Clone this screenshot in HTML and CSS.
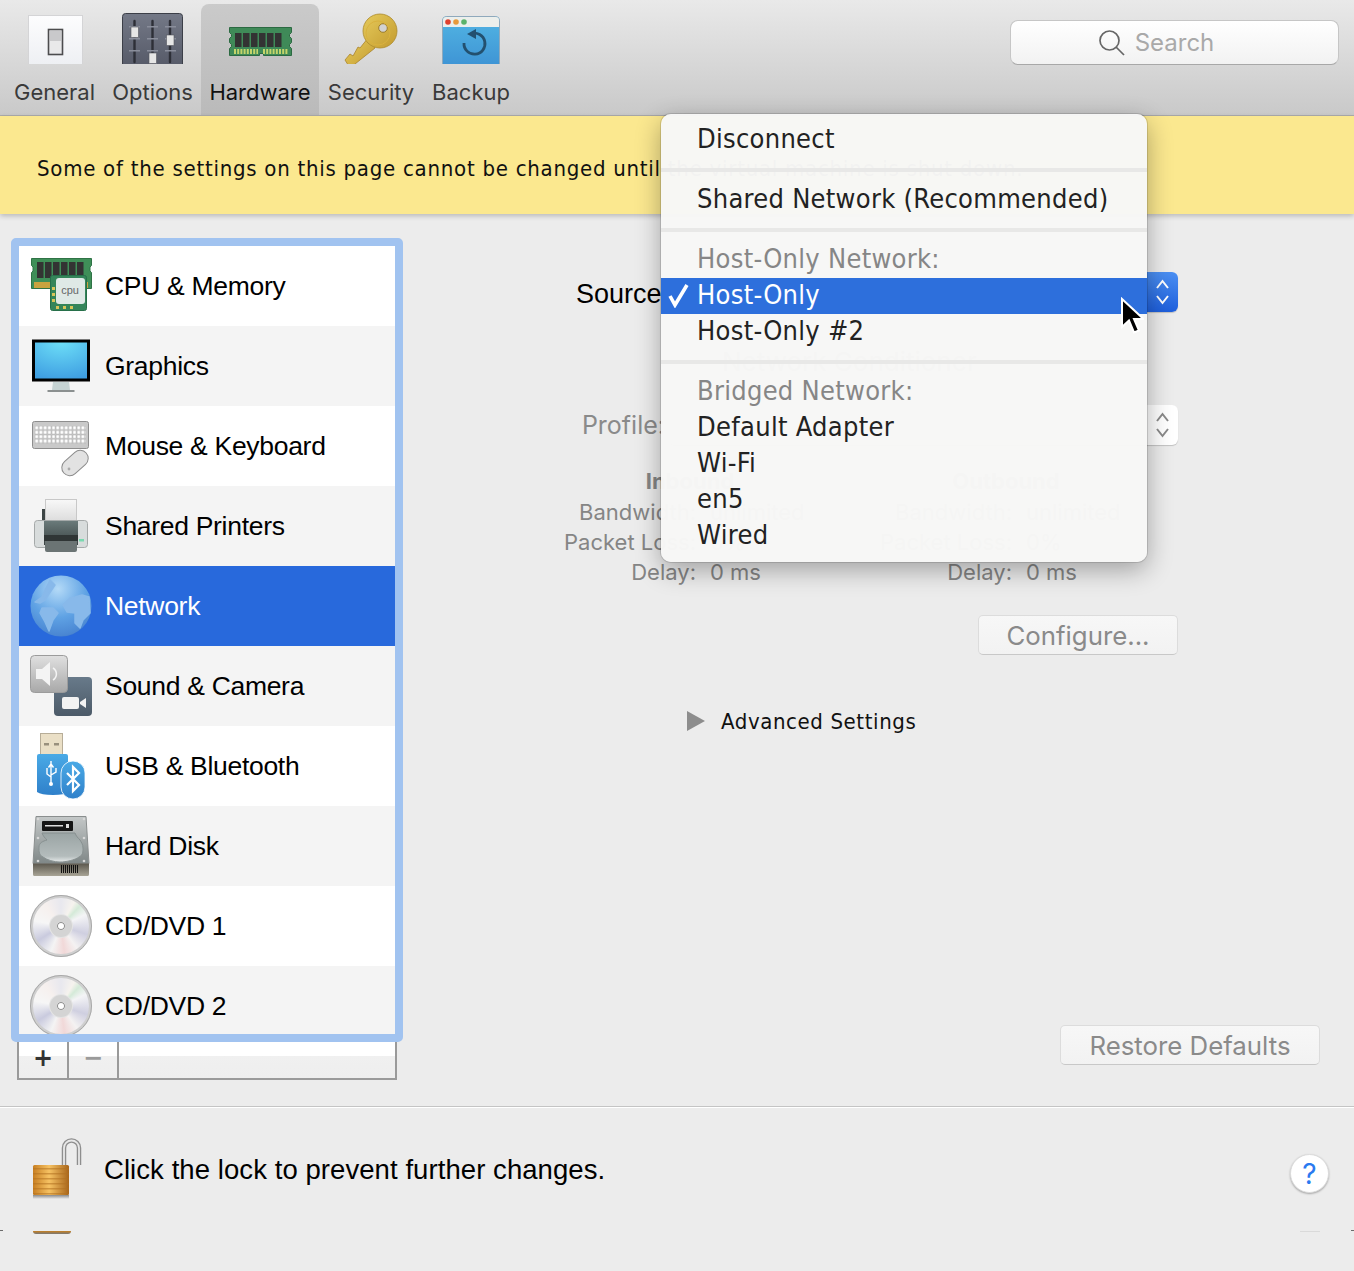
FILE: index.html
```html
<!DOCTYPE html>
<html lang="en">
<head>
<meta charset="utf-8">
<title>Hardware - Network</title>
<link rel="stylesheet" href="styles.css">
</head>
<body>
<div class="window">
  <header class="toolbar">
    <nav class="tools">
      <div class="tool tool-general">
        <svg class="tool-icon" viewBox="0 0 99 60"><defs><linearGradient id="gen" x1="0" y1="0" x2="0" y2="1"><stop offset="0" stop-color="#fdfdfe"/><stop offset="1" stop-color="#eceef2"/></linearGradient></defs><rect x="23.500" y="11.500" width="54" height="55" fill="url(#gen)" stroke="#d4d4d6"/><rect x="43.500" y="25.500" width="14" height="25" fill="#e9e9ea" stroke="#4c4c4e" stroke-width="1.600"/><rect x="45" y="27" width="11" height="10" fill="#c9c9cb"/></svg>
        <span class="tool-label">General</span>
      </div>
      <div class="tool tool-options">
        <svg class="tool-icon" viewBox="0 0 97 60"><defs><linearGradient id="opt" x1="0" y1="0" x2="0" y2="1"><stop offset="0" stop-color="#747987"/><stop offset="1" stop-color="#545866"/></linearGradient></defs><rect x="18.500" y="9.500" width="60" height="56" rx="3" fill="url(#opt)" stroke="#3c3f48"/><g stroke="#2d2f37" stroke-width="2.400" stroke-linecap="round"><line x1="30.500" y1="17" x2="30.500" y2="58"/><line x1="48.500" y1="17" x2="48.500" y2="58"/><line x1="66" y1="17" x2="66" y2="58"/></g><g fill="#8a8e9b"><rect x="25" y="22" width="11" height="1.500"/><rect x="43" y="22" width="11" height="1.500"/><rect x="61" y="22" width="11" height="1.500"/><rect x="25" y="34" width="11" height="1.500"/><rect x="43" y="34" width="11" height="1.500"/><rect x="61" y="34" width="11" height="1.500"/><rect x="25" y="46" width="11" height="1.500"/><rect x="43" y="46" width="11" height="1.500"/><rect x="61" y="46" width="11" height="1.500"/></g><g fill="#e6e6e6" stroke="#55575f" stroke-width=".6"><rect x="27" y="23" width="7.500" height="10.500"/><rect x="45" y="49" width="7.500" height="10.500"/><rect x="62.500" y="31" width="7.500" height="10.500"/></g></svg>
        <span class="tool-label">Options</span>
      </div>
      <div class="tool tool-active tool-hardware">
        <svg class="tool-icon" viewBox="0 0 118 60"><path d="M28.500 23.500h62v5l-2 2v2l2 2v4l-2 2v2l2 2v7h-28v-2h-4v2h-30v-7l2-2v-2l-2-2v-4l2-2v-2l-2-2z" fill="#3f8a58" stroke="#2c6a42"/><g fill="#333"><rect x="34" y="29" width="6.500" height="14"/><rect x="42" y="29" width="6.500" height="14"/><rect x="50" y="29" width="6.500" height="14"/><rect x="58" y="29" width="6.500" height="14"/><rect x="66" y="29" width="6.500" height="14"/><rect x="74" y="29" width="6.500" height="14"/></g><path d="M33 47.500h24M62 47.500h25" stroke="#c3d46a" stroke-width="5" stroke-dasharray="2 1.200"/></svg>
        <span class="tool-label">Hardware</span>
      </div>
      <div class="tool tool-security">
        <svg class="tool-icon" viewBox="0 0 104 60"><defs><linearGradient id="keyg" x1="0" y1="0" x2="1" y2="1"><stop offset="0" stop-color="#e6cb5c"/><stop offset="1" stop-color="#c39a2e"/></linearGradient></defs><path d="M49 34l-8 10-2-1-5 9-3-2-5 6 5 8 25-20z" fill="url(#keyg)" stroke="#a9842b" stroke-width=".8" stroke-linejoin="round"/><circle cx="61" cy="27" r="17" fill="url(#keyg)" stroke="#ac8a2c" stroke-width=".8"/><circle cx="64" cy="24" r="4.300" fill="#d2d2d2" stroke="#9c7c2a"/><circle cx="59" cy="29" r="12" fill="none" stroke="#d9b23e" stroke-width="1"/></svg>
        <span class="tool-label">Security</span>
      </div>
      <div class="tool tool-backup">
        <svg class="tool-icon" viewBox="0 0 96 60"><defs><linearGradient id="bak" x1="0" y1="0" x2="0" y2="1"><stop offset="0" stop-color="#52b5e3"/><stop offset="1" stop-color="#3d92d4"/></linearGradient></defs><rect x="19.500" y="12.500" width="57" height="52" rx="4" fill="url(#bak)" stroke="#8fa9bc"/><path d="M20 23v-7a3 3 0 0 1 3-3h50a3 3 0 0 1 3 3v7z" fill="#ecefec"/><circle cx="25" cy="18" r="2.800" fill="#e0402e"/><circle cx="33" cy="18" r="2.800" fill="#e89a3c"/><circle cx="41" cy="18" r="2.800" fill="#5cb36a"/><path d="M41 39a10.500 10.500 0 1 0 7-9.200" fill="none" stroke="#23506f" stroke-width="2.800"/><path d="M44 30l9-5v10z" fill="#23506f"/></svg>
        <span class="tool-label">Backup</span>
      </div>
    </nav>
    <div class="search">
      <svg class="search-icon" viewBox="0 0 26 26"><circle cx="10.500" cy="10.500" r="9.500" fill="none" stroke="#666" stroke-width="1.700"/><line x1="17" y1="17" x2="25" y2="25" stroke="#666" stroke-width="1.700"/></svg>
      <span class="search-text">Search</span>
    </div>
  </header>

  <div class="banner">Some of the settings on this page cannot be changed until the virtual machine is shut down.</div>

  <main class="main">
    <aside class="sidebar">
      <div class="list-ring">
        <ul class="list">
          <li class="row">
            <svg class="row-icon" viewBox="0 0 62 80"><path d="M1.500 12.500h60v7l-1.500 1.500v4l1.500 1.500v16h-60v-16l1.500-1.500v-4l-1.500-1.500z" fill="#3f8f58" stroke="#2f7346"/><g fill="#333"><rect x="7" y="16" width="6.500" height="16"/><rect x="15" y="16" width="6.500" height="16"/><rect x="23" y="16" width="6.500" height="16"/><rect x="31" y="16" width="6.500" height="16"/><rect x="39" y="16" width="6.500" height="16"/><rect x="47" y="16" width="6.500" height="16"/></g><rect x="4" y="36" width="54" height="6" fill="#c9a33f"/><rect x="20.500" y="29.500" width="36" height="35" rx="2" fill="#35855a" stroke="#27704a"/><rect x="26" y="32" width="29" height="26" rx="3" fill="#dfe9e6"/><g fill="#d9c55a"><rect x="22" y="41" width="3" height="3"/><rect x="22" y="47" width="3" height="3"/><rect x="22" y="53" width="3" height="3"/><rect x="26" y="60" width="3" height="3"/><rect x="33" y="60" width="3" height="3"/><rect x="40" y="60" width="3" height="3"/></g><text x="40" y="48" class="cpu-text">cpu</text></svg>
            <span class="row-label">CPU &amp; Memory</span>
          </li>
          <li class="row">
            <svg class="row-icon" viewBox="0 0 62 80"><defs><radialGradient id="scr" cx=".5" cy="0" r="1"><stop offset="0" stop-color="#6ee0f8"/><stop offset="1" stop-color="#3f9fe2"/></radialGradient></defs><rect x="3.500" y="15" width="55" height="39" fill="url(#scr)" stroke="#000" stroke-width="3"/><path d="M23 56h16l1 8H22z" fill="#c6d3d3"/><rect x="17.500" y="64" width="27" height="2" fill="#8b9090"/></svg>
            <span class="row-label">Graphics</span>
          </li>
          <li class="row">
            <svg class="row-icon" viewBox="0 0 62 80"><defs><pattern id="keys" width="4.200" height="4.400" patternUnits="userSpaceOnUse" x="5" y="20"><rect width="3.400" height="3.600" fill="#fff" stroke="#8c8c8c" stroke-width=".4"/></pattern></defs><rect x="2.500" y="15.500" width="56" height="27" rx="2" fill="#c9c9c9" stroke="#8e8e8e"/><rect x="5" y="20" width="51" height="18" fill="url(#keys)"/><g transform="rotate(-42 45 57)"><rect x="30" y="49" width="30" height="16" rx="8" fill="#e2e2e2" stroke="#8b8b8b"/></g><circle cx="39" cy="63" r="1.400" fill="#aaa"/></svg>
            <span class="row-label">Mouse &amp; Keyboard</span>
          </li>
          <li class="row">
            <svg class="row-icon" viewBox="0 0 62 80"><defs><linearGradient id="prn" x1="0" y1="0" x2="0" y2="1"><stop offset="0" stop-color="#f8f8f8"/><stop offset="1" stop-color="#dcdcdc"/></linearGradient><linearGradient id="prb" x1="0" y1="0" x2="0" y2="1"><stop offset="0" stop-color="#6a7a7a"/><stop offset="1" stop-color="#3b4444"/></linearGradient></defs><rect x="12" y="23" width="34" height="20" fill="#3c4444"/><rect x="15.500" y="13.500" width="31" height="22" fill="url(#prn)" stroke="#c8c8c8"/><rect x="4.500" y="34.500" width="53" height="27" rx="3" fill="#d8dcdc" stroke="#a5a9a9"/><rect x="14" y="35" width="34" height="24" fill="url(#prb)"/><rect x="14" y="49" width="34" height="6" fill="#2f3535"/><path d="M15 55h32v9a2 2 0 0 1-2 2H17a2 2 0 0 1-2-2z" fill="#6b7474"/><rect x="49" y="53" width="5" height="2.500" fill="#7ad9b0"/></svg>
            <span class="row-label">Shared Printers</span>
          </li>
          <li class="row row-selected">
            <svg class="row-icon" viewBox="0 0 62 80"><defs><radialGradient id="glb" cx=".45" cy=".22" r=".85"><stop offset="0" stop-color="#b4daf7"/><stop offset=".55" stop-color="#5fa2e4"/><stop offset=".9" stop-color="#4a86d2"/><stop offset="1" stop-color="#3d6fb6"/></radialGradient></defs><circle cx="31" cy="40" r="30.500" fill="url(#glb)"/><g fill="#88b9ea" stroke="#88b9ea" stroke-width="1.500" stroke-linejoin="round"><path d="M33 39l7-7 5-1 7-2 7 2 1 16-7 7-3 8-5-5v-10l-8-1z"/><path d="M12 42h11l5 5-5 7-4 11-4-9-5-9z"/><path d="M5 36l7-5 3-7 5-10 5 5-10 15-5 3z"/></g></svg>
            <span class="row-label">Network</span>
          </li>
          <li class="row">
            <svg class="row-icon" viewBox="0 0 62 80"><defs><linearGradient id="spk" x1="0" y1="0" x2="0" y2="1"><stop offset="0" stop-color="#e0e0e0"/><stop offset="1" stop-color="#a8a8a8"/></linearGradient><linearGradient id="cam" x1="0" y1="0" x2="0" y2="1"><stop offset="0" stop-color="#687a8a"/><stop offset="1" stop-color="#4c5a68"/></linearGradient></defs><rect x="24" y="31" width="38" height="39" rx="4" fill="url(#cam)"/><rect x="0.500" y="9.500" width="37" height="37" rx="4" fill="url(#spk)" stroke="#9c9c9c"/><path d="M6 23h6l8-7v24l-8-7H6z" fill="#f4f4f4"/><path d="M23 22a7 7 0 0 1 0 12" fill="none" stroke="#f4f4f4" stroke-width="1.500"/><rect x="32" y="51" width="17" height="12" rx="2" fill="#f2f2f2"/><path d="M50 56l6-4v10l-6-4z" fill="#f2f2f2"/></svg>
            <span class="row-label">Sound &amp; Camera</span>
          </li>
          <li class="row">
            <svg class="row-icon" viewBox="0 0 62 80"><defs><linearGradient id="usb" x1="0" y1="0" x2="0" y2="1"><stop offset="0" stop-color="#4aaae6"/><stop offset="1" stop-color="#2f80ca"/></linearGradient></defs><rect x="10.500" y="7.500" width="22" height="22" fill="#eadfc6" stroke="#b7ad98"/><rect x="14" y="17" width="5" height="2.500" fill="#99907d"/><rect x="24" y="17" width="5" height="2.500" fill="#99907d"/><path d="M7 30q0-2 2-2h27q2 0 2 2v36q-3 3-15 3-12 0-16-3z" fill="url(#usb)"/><path d="M21 35v22m0-19l-2.500 3.500m2.500-3.500l2.500 3.500M17 42v6l4 3m5-9v4l-5 3" stroke="#fff" stroke-width="1.400" fill="none"/><circle cx="21" cy="58" r="2" fill="#fff"/><rect x="31" y="35" width="24" height="38" rx="12" fill="url(#usb)" stroke="#fff" stroke-width=".8"/><path d="M37 47l12 12-6 6V41l6 6-12 12" fill="none" stroke="#fff" stroke-width="2.200"/></svg>
            <span class="row-label">USB &amp; Bluetooth</span>
          </li>
          <li class="row">
            <svg class="row-icon" viewBox="0 0 62 80"><defs><linearGradient id="hdd" x1="0" y1="0" x2="0" y2="1"><stop offset="0" stop-color="#c4c8c8"/><stop offset="1" stop-color="#7f8787"/></linearGradient><linearGradient id="hdp" x1="0" y1="0" x2="0" y2="1"><stop offset="0" stop-color="#9aa4a4"/><stop offset=".8" stop-color="#b4bcbc"/><stop offset="1" stop-color="#e6eaea"/></linearGradient><linearGradient id="hdb" x1="0" y1="0" x2="0" y2="1"><stop offset="0" stop-color="#5c584e"/><stop offset="1" stop-color="#a8a496"/></linearGradient></defs><path d="M6 10.500h50l3 47H3z" fill="url(#hdd)" stroke="#8a8e8e"/><path d="M3 57.500h56v11a1.500 1.500 0 0 1-1.500 1.500h-53a1.500 1.500 0 0 1-1.500-1.500z" fill="url(#hdb)"/><path d="M12 27c1 3 3 5 5 7-4 1-8 3-8 7 0 5 0 8 4 10 4 3 11 5 17 5s15-2 19-5c4-2 4-5 4-9 0-4-2-6-3-8-2-2-4-4-5-7z" fill="url(#hdp)" stroke="#879090" stroke-linejoin="round"/><rect x="12" y="15" width="31" height="10" rx="1" fill="#151515"/><rect x="15" y="19" width="18" height="1.500" fill="#ddd"/><rect x="36" y="18" width="3" height="4" fill="#ddd"/><path d="M31 63h17" stroke="#111" stroke-width="8" stroke-dasharray="1 1"/><g fill="#d8d8d8"><circle cx="8" cy="13" r="1.300"/><circle cx="54" cy="13" r="1.300"/><circle cx="8" cy="32" r="1.300"/><circle cx="54" cy="32" r="1.300"/><circle cx="8" cy="55" r="1.300"/><circle cx="54" cy="55" r="1.300"/></g></svg>
            <span class="row-label">Hard Disk</span>
          </li>
          <li class="row">
            <div class="cd"><div class="cd-hub"></div></div>
            <span class="row-label">CD/DVD 1</span>
          </li>
          <li class="row">
            <div class="cd"><div class="cd-hub"></div></div>
            <span class="row-label">CD/DVD 2</span>
          </li>
        </ul>
      </div>
      <div class="list-actions">
        <span class="action action-add">+</span>
        <span class="action action-remove">−</span>
      </div>
    </aside>

    <section class="pane">
      <div class="form-row">
        <span class="form-label form-label-source">Source:</span>
        <div class="select"><span class="stepper stepper-active"><svg class="chev" viewBox="0 0 16 30"><path d="M2.500 11L8 4l5.500 7M2.500 19L8 26l5.500-7" fill="none" stroke="currentColor" stroke-width="2"/></svg></span></div>
      </div>
      <h2 class="section-title">Network Conditioner</h2>
      <div class="form-row form-row-profile">
        <span class="form-label form-label-dim">Profile:</span>
        <div class="select"><span class="stepper"><svg class="chev" viewBox="0 0 16 30"><path d="M2.500 11L8 4l5.500 7M2.500 19L8 26l5.500-7" fill="none" stroke="currentColor" stroke-width="2"/></svg></span></div>
      </div>
      <div class="stats">
        <div class="stat">
          <div class="stat-title">Inbound</div>
          <span class="stat-key">Bandwidth:</span><span class="stat-val">unlimited</span>
          <span class="stat-key">Packet Loss:</span><span class="stat-val">0%</span>
          <span class="stat-key">Delay:</span><span class="stat-val">0 ms</span>
        </div>
        <div class="stat">
          <div class="stat-title">Outbound</div>
          <span class="stat-key">Bandwidth:</span><span class="stat-val">unlimited</span>
          <span class="stat-key">Packet Loss:</span><span class="stat-val">0%</span>
          <span class="stat-key">Delay:</span><span class="stat-val">0 ms</span>
        </div>
      </div>
      <div class="configure-wrap"><button class="btn btn-configure">Configure...</button></div>
      <div class="advanced"><span class="triangle"></span><span class="advanced-text">Advanced Settings</span></div>
      <button class="btn btn-restore">Restore Defaults</button>
    </section>
  </main>

  <footer class="footer">
    <svg class="lock" viewBox="0 0 52 62"><defs><linearGradient id="lk" x1="0" y1="0" x2="1" y2="0"><stop offset="0" stop-color="#c87f22"/><stop offset=".45" stop-color="#f6c263"/><stop offset="1" stop-color="#a8651a"/></linearGradient><pattern id="lks" width="4" height="5" patternUnits="userSpaceOnUse"><rect width="4" height="1.500" fill="#b06f1e" opacity=".55"/></pattern><linearGradient id="lkf" x1="0" y1="0" x2="0" y2="1"><stop offset="0" stop-color="#888"/><stop offset="1" stop-color="#ececec"/></linearGradient></defs><path d="M33 30V10a7.500 7.500 0 0 1 15 0v17" fill="none" stroke="#8e8e8e" stroke-width="4.500"/><path d="M33 30V10a7.500 7.500 0 0 1 15 0v17" fill="none" stroke="#e8e8e8" stroke-width="1.800"/><rect x="2" y="27" width="36" height="30" rx="1.500" fill="url(#lk)"/><rect x="2" y="27" width="36" height="30" fill="url(#lks)"/><rect x="2" y="57" width="36" height="4" fill="url(#lkf)"/></svg>
    <span class="footer-text">Click the lock to prevent further changes.</span>
    <span class="help">?</span>
  </footer>
  <div class="tail">
    <span class="tail-lock"></span>
    <span class="tail-help"></span>
  </div>

  <div class="menu">
    <div class="menu-item">Disconnect</div>
    <div class="menu-sep"></div>
    <div class="menu-item">Shared Network (Recommended)</div>
    <div class="menu-sep"></div>
    <div class="menu-item menu-head">Host-Only Network:</div>
    <div class="menu-item menu-active"><svg class="check" viewBox="0 0 26 26"><path d="M5 14l5 9L22 3" fill="none" stroke="#fff" stroke-width="3.600"/></svg>Host-Only</div>
    <div class="menu-item">Host-Only #2</div>
    <div class="menu-sep"></div>
    <div class="menu-item menu-head">Bridged Network:</div>
    <div class="menu-item">Default Adapter</div>
    <div class="menu-item">Wi-Fi</div>
    <div class="menu-item">en5</div>
    <div class="menu-item">Wired</div>
  </div>
  <svg class="cursor" viewBox="0 0 24 38"><path d="M2 2v28l7-6.500 5 12 5-2-5-11.500h9.500z" fill="#000" stroke="#fff" stroke-width="2"/></svg>
</div>
</body>
</html>
```

FILE: styles.css
```css
* { box-sizing: border-box; }
html, body { margin: 0; padding: 0; }
body { width: 1354px; height: 1271px; overflow: hidden; background: #ececec; color: #000; font-family: "Liberation Sans", Arial, sans-serif; }
.window { position: relative; width: 1354px; height: 1271px; display: flex; flex-direction: column; overflow: hidden; }

/* toolbar */
.toolbar { height: 116px; flex: none; display: flex; justify-content: space-between; align-items: flex-start; padding: 4px 15px 0 5px; background: linear-gradient(#e9e9e9, #c9c9c9); border-bottom: 1px solid #adadad; }
.tools { display: flex; height: 111px; }
.tool { display: flex; flex-direction: column; align-items: center; height: 111px; flex: none; border-radius: 8px 8px 0 0; }
.tool-general { width: 99px; }
.tool-options { width: 97px; }
.tool-hardware { width: 118px; }
.tool-security { width: 104px; }
.tool-backup { width: 96px; }
.tool-active { background: linear-gradient(#cacaca, #bababa); }
.tool-icon { width: 100%; height: 60px; display: block; }
.tool-label { font-family: Inter, "Open Sans", sans-serif; font-size: 22px; line-height: 30px; margin-top: 13px; color: #3a3a3a; white-space: nowrap; }
.tool-active .tool-label { color: #111; }

.search { width: 329px; height: 45px; margin-top: 16px; display: flex; align-items: center; justify-content: center; gap: 10px; padding-right: 36px; background: linear-gradient(#ffffff, #f2f2f2); border: 1px solid #c6c6c6; border-bottom-color: #a8a8a8; border-radius: 8px; }
.search-icon { width: 26px; height: 26px; }
.search-text { font-family: Inter, sans-serif; font-size: 24px; line-height: 30px; padding-top: 1px; color: #a9a9a9; }

/* banner */
.banner { position: relative; z-index: 2; height: 98px; flex: none; display: flex; align-items: center; padding: 7px 0 0 37px; background: #fbe88f; box-shadow: 0 2px 5px rgba(0,0,0,.22); font-family: "DejaVu Sans", sans-serif; font-stretch: condensed; font-size: 22px; letter-spacing: .74px; white-space: nowrap; color: #111; }

/* main */
.main { flex: none; height: 893px; display: flex; border-bottom: 1px solid #c4c4c4; box-shadow: 0 1px 0 #fff; }

.sidebar { width: 403px; flex: none; padding: 24px 0 0 11px; }
.list-ring { position: relative; z-index: 1; width: 392px; height: 804px; border: 8px solid #a1c3f0; border-radius: 5px; box-shadow: inset 0 0 0 1px #8aaee3; overflow: hidden; }
.list { list-style: none; margin: 0; padding: 0; }
.row { height: 80px; display: flex; align-items: center; background: #fff; padding-left: 11px; }
.row:nth-child(even) { background: #f4f4f4; }
.row-selected, .row-selected:nth-child(odd) { background: #2869dc; color: #fff; }
.row-icon { width: 62px; height: 80px; flex: none; }
.row-label { margin-left: 13px; font-size: 26.500px; letter-spacing: -.3px; white-space: nowrap; }
.cpu-text { font-family: "Liberation Sans", sans-serif; font-size: 11px; fill: #666; text-anchor: middle; }

.cd { width: 62px; height: 62px; flex: none; border-radius: 50%; border: 3px solid #cfcfcf; outline: 1px solid #a9a9a9; outline-offset: -1px; background: conic-gradient(#e8e8ee, #f6f3ee 8%, #d4ead8 12%, #f4f4f6 18%, #cfcfe0 30%, #f4f2f2 40%, #f1d8d8 48%, #f4f4f4 56%, #c9cade 66%, #f6f6f6 78%, #f6f0ee 90%, #e8e8ee); display: flex; align-items: center; justify-content: center; }
.cd-hub { width: 22px; height: 22px; border-radius: 50%; background: #fff; border: 7px solid #d4d4d4; box-shadow: 0 0 0 1px #e4e4e4, inset 0 0 0 1px #8c8c8c; }

.list-actions { width: 380px; height: 46px; margin: -8px 0 0 6px; display: flex; border: 2px solid #9a9a9a; border-top: 0; background: linear-gradient(#fff 0, #fff 50%, #f0f0f0 50%, #eee 100%); }
.action { width: 50px; display: flex; align-items: center; justify-content: center; border-right: 2px solid #9a9a9a; padding-top: 4px; font-family: "DejaVu Sans", sans-serif; font-weight: 700; font-size: 24px; line-height: 1; color: #333; }
.action-remove { color: #9a9a9a; }

/* pane */
.pane { flex: 1; display: flex; flex-direction: column; padding-top: 58px; min-width: 0; }
.form-row { display: flex; height: 40px; align-items: center; }
.form-row-profile { margin-top: 28px; }
.form-label { width: 266px; flex: none; text-align: right; font-size: 27px; white-space: nowrap; }
.form-label-source { padding-top: 4px; }
.form-label-dim { color: #8a8a8a; font-family: Inter, sans-serif; font-size: 25px; padding-right: 4px; }
.select { position: relative; width: 509px; height: 40px; flex: none; background: #fff; border-radius: 6px; box-shadow: 0 1px 1px rgba(0,0,0,.18); }
.stepper { position: absolute; right: 0; top: 0; width: 32px; height: 40px; display: flex; align-items: center; justify-content: center; color: #8a8a8a; border-radius: 0 6px 6px 0; }
.stepper-active { background: linear-gradient(#4b8ff2, #1e5fdc); color: #fff; }
.chev { width: 17px; height: 30px; }
.section-title { margin: 0; height: 65px; padding: 35px 0 0 319px; font-size: 26px; line-height: 30px; font-weight: 400; color: #888; white-space: nowrap; font-family: Inter, sans-serif; }

.stats { display: flex; gap: 8px; margin: 19px 0 0 133px; }
.stat { display: grid; grid-template-columns: 160px 134px; grid-template-rows: 33px; column-gap: 14px; grid-auto-rows: 30px; align-items: center; font-family: Inter, sans-serif; font-size: 22px; color: #858585; width: 308px; }
.stat-title { grid-column: 1 / -1; text-align: center; font-weight: 700; white-space: nowrap; }
.stat-key { text-align: right; white-space: nowrap; }
.stat-val { white-space: nowrap; }

.configure-wrap { display: flex; justify-content: flex-end; padding-right: 176px; margin-top: 28px; }
.btn { height: 40px; padding: 0; background: linear-gradient(#f7f7f7, #f2f2f2); border: 1px solid #dcdcdc; border-bottom-color: #c8c8c8; border-radius: 5px; font-family: Inter, sans-serif; font-size: 25.800px; color: #8a8a8a; }
.btn-configure { width: 200px; }
.advanced { display: flex; align-items: center; height: 24px; margin: 54px 0 0 284px; }
.triangle { width: 0; height: 0; border-style: solid; border-width: 10px 0 10px 18px; border-color: transparent transparent transparent #8d8d8d; }
.advanced-text { margin-left: 16px; font-family: "DejaVu Sans", sans-serif; font-stretch: condensed; font-size: 22px; letter-spacing: .6px; color: #111; white-space: nowrap; }
.btn-restore { width: 260px; margin: auto 34px 41px auto; }

/* footer */
.footer { flex: none; height: 124px; display: flex; align-items: center; padding: 0 25px 0 31px; position: relative; }
.lock { width: 52px; height: 62px; flex: none; }
.footer-text { margin: 2px 0 0 21px; font-size: 27.500px; white-space: nowrap; letter-spacing: .07px; }
.help { margin: 9px 0 0 auto; width: 39px; height: 39px; border-radius: 50%; display: flex; align-items: center; justify-content: center; background: #fff; border: 1px solid #dcdcdc; box-shadow: 0 1px 2px rgba(0,0,0,.3); color: #2a7af0; font-size: 28px; font-family: Inter, sans-serif; }
.tail { flex: 1; position: relative; }
.tail::before, .tail::after { content: ""; position: absolute; top: -1px; width: 3px; height: 1px; background: #6b6b6b; }
.tail::before { left: 0; }
.tail::after { right: 0; }
.tail-lock { position: absolute; left: 33px; top: 0; width: 38px; height: 3px; background: linear-gradient(#c8801f, #777); border-radius: 0 0 4px 4px; }
.tail-help { position: absolute; left: 1300px; top: 0; width: 20px; height: 1px; background: #dadada; }

/* popup */
.menu { position: absolute; z-index: 5; left: 661px; top: 114px; width: 486px; height: 448px; padding: 7px 0 9px; border-radius: 10px; background: rgba(247,247,246,.98); box-shadow: 0 0 0 1px rgba(0,0,0,.12), 0 8px 26px rgba(0,0,0,.32); font-family: "DejaVu Sans", sans-serif; font-stretch: condensed; font-size: 27px; letter-spacing: .28px; color: #222; }
.menu-item { position: relative; height: 36px; line-height: 36px; padding-left: 36px; white-space: nowrap; }
.menu-head { color: #868686; }
.menu-active { height: 36px; line-height: 34px; margin: 1px 0 -1px; background: #2d6fdc; color: #fff; }
.check { position: absolute; left: 4px; top: 4px; width: 26px; height: 26px; }
.menu-sep { height: 24px; position: relative; }
.menu-sep::after { content: ""; position: absolute; left: 0; right: 0; top: 11px; height: 4px; background: #e8e8e7; }
.cursor { position: absolute; z-index: 6; left: 1120px; top: 297px; width: 24px; height: 38px; }
```
